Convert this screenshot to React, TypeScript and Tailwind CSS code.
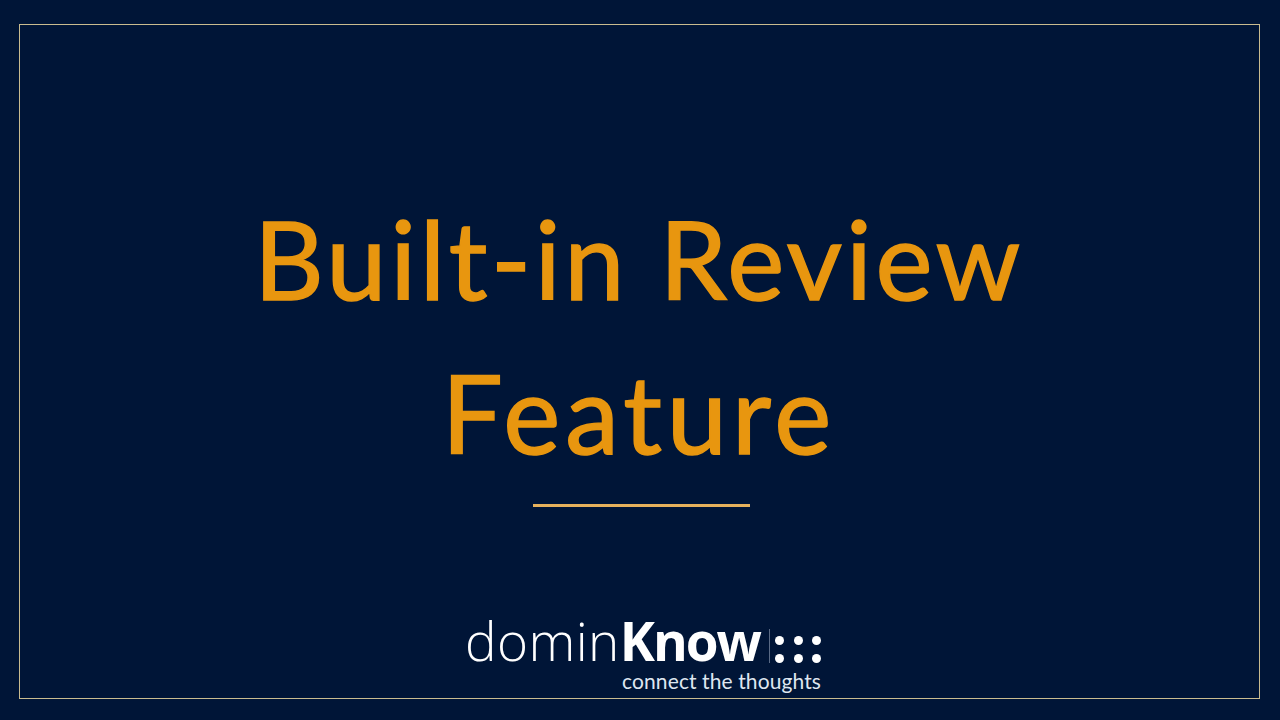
export default function App() {
    return (
        <div className="w-full h-screen bg-[#001537] pt-6 pl-[19px] pr-5 pb-[21px]">
            <div className="h-full border border-[#c9bb8f] flex flex-col items-center font-['Lato',sans-serif]">
                <div className="shrink-0 mt-[156px] ml-[-1px] text-center text-[#e8960f] text-[108px] leading-[154px] [-webkit-text-stroke:1.5px_#e8960f]">
                    <div className="tracking-[3.6px]">Built-in Review</div>
                    <div className="tracking-[5px]">Feature</div>
                </div>
                <div className="shrink-0 mt-[15px] ml-[3px] w-[217px] h-[3px] bg-[#e6b15c]" />
                <div className="shrink-0 mt-[108px] ml-[7px] w-[356px] flex flex-col items-end text-white font-['Open_Sans',sans-serif]">
                    <div className="flex items-center h-[52px]">
                        <span className="text-[53px] leading-[52px] font-light tracking-[0.4px]">domin</span>
                        <span className="text-[53px] leading-[52px] font-bold tracking-[-2px]">Know</span>
                        <div className="ml-[9px] w-px h-[34px] mt-[10px] bg-[#5a6a85]" />
                        <div className="ml-[5px] mt-[16px] grid grid-cols-3 gap-x-[10px] gap-y-[9px]">
                            {[0, 1, 2, 3, 4, 5].map(i => (
                                <div key={i} className="w-[9px] h-[9px] rounded-full bg-white" />
                            ))}
                        </div>
                    </div>
                    <div className="mt-[2px] text-[21px] leading-[24px] tracking-[0.1px] text-[#dfe6f0] font-['Lato',sans-serif]">connect the thoughts</div>
                </div>
            </div>
        </div>
    );
}
